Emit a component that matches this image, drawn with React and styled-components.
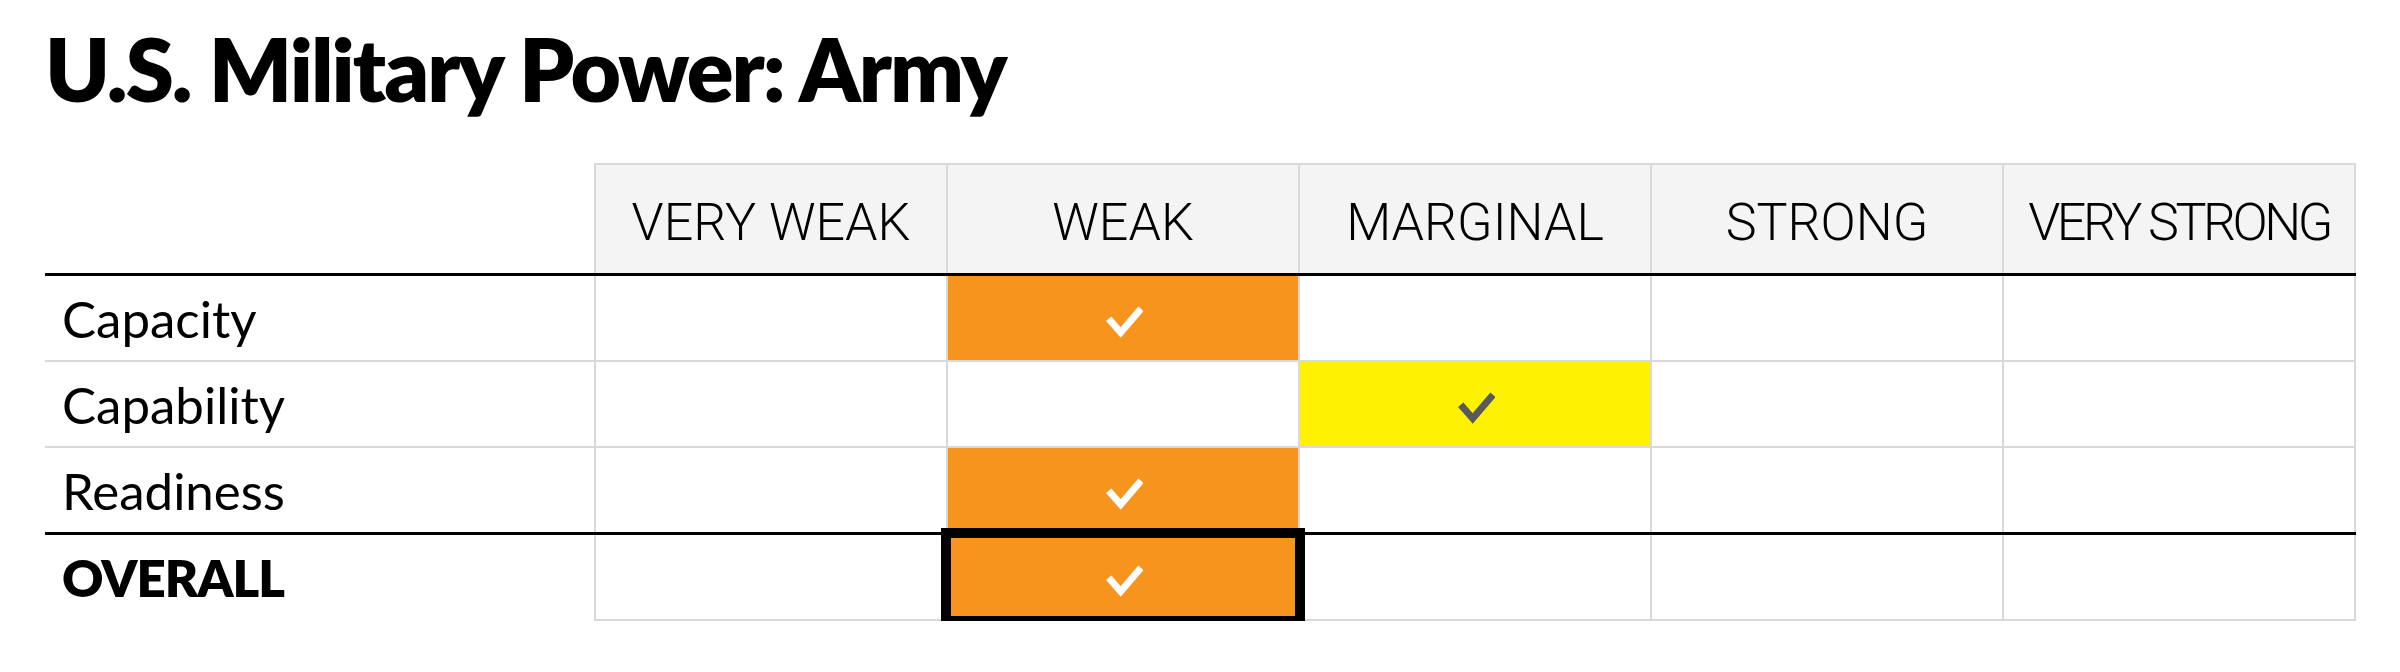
import React from "react";
import styled, { createGlobalStyle } from "styled-components";

const GlobalStyle = createGlobalStyle`
  html, body { margin: 0; padding: 0; background: #ffffff; }
  body { font-family: "Lato", "Liberation Sans", sans-serif; color: #000; }
`;

const Page = styled.div`
  padding: 17px 0 0 45px;
  width: 2400px;
  box-sizing: border-box;
`;

const Title = styled.h1`
  margin: 0 0 42px 0;
  font-family: "Lato", "Liberation Sans", sans-serif;
  font-weight: 800;
  font-size: 87px;
  line-height: 1.2;
  letter-spacing: -2px;
  color: #000;
`;

const Table = styled.table`
  border-collapse: collapse;
  table-layout: fixed;
  width: 2310px;
`;

const LabelCol = styled.col`
  width: 550px;
`;

const DataCol = styled.col`
  width: 352px;
`;

const CornerCell = styled.th`
  border-bottom: 3px solid #000;
  padding: 0;
`;

const HeadCell = styled.th`
  background: #f4f4f4;
  border: 2px solid #d9d9d9;
  border-bottom: 3px solid #000;
  height: 101px;
  padding: 7px 0 0 0;
  font-family: "Roboto", "Lato", "Liberation Sans", sans-serif;
  font-weight: 300;
  font-size: 52px;
  letter-spacing: ${(p) => (p.$tight ? "-3.5px" : "0")};
  text-align: center;
  vertical-align: middle;
  white-space: nowrap;
  color: #000;
`;

const RowLabel = styled.td`
  padding: 0 0 0 17px;
  height: 84px;
  font-family: "Lato", "Liberation Sans", sans-serif;
  font-weight: ${(p) => (p.$bold ? 800 : 400)};
  font-size: 51px;
  letter-spacing: ${(p) => (p.$bold ? "-1px" : "0")};
  text-align: left;
  vertical-align: middle;
  white-space: nowrap;
  border-bottom: ${(p) =>
    p.$edge === "strong" ? "3px solid #000" : p.$edge === "none" ? "none" : "2px solid #d9d9d9"};
`;

const Cell = styled.td`
  padding: 0;
  height: 84px;
  background: ${(p) => p.$fill || "#ffffff"};
  border: 2px solid #d9d9d9;
  border-bottom: ${(p) => (p.$edge === "strong" ? "3px solid #000" : "2px solid #d9d9d9")};
  vertical-align: middle;
  ${(p) =>
    p.$framed
      ? `
    position: relative;
    z-index: 1;
    outline: 10px solid #000;
    outline-offset: -4px;
  `
      : ""}
`;

const CheckSvg = styled.svg`
  display: block;
  margin: 0 auto;
  width: 40px;
  height: 40px;
`;

function Check({ color }) {
  return (
    <CheckSvg viewBox="0 0 40 40" aria-hidden="true">
      <polyline
        points="5.7,20.8 17.7,34.5 38,10.8"
        fill="none"
        stroke={color}
        strokeWidth="7"
        strokeLinecap="butt"
        strokeLinejoin="miter"
      />
    </CheckSvg>
  );
}

const LEVELS = [
  { name: "VERY WEAK" },
  { name: "WEAK" },
  { name: "MARGINAL" },
  { name: "STRONG" },
  { name: "VERY STRONG", tight: true },
];

const ORANGE = "#f7941e";
const YELLOW = "#fff200";

const ROWS = [
  { label: "Capacity", level: 1, fill: ORANGE, check: "#ffffff", edge: "soft" },
  { label: "Capability", level: 2, fill: YELLOW, check: "#58595b", edge: "soft" },
  { label: "Readiness", level: 1, fill: ORANGE, check: "#ffffff", edge: "strong" },
  { label: "OVERALL", level: 1, fill: ORANGE, check: "#ffffff", edge: "none", bold: true, framed: true },
];

export default function App() {
  return (
    <>
      <GlobalStyle />
      <Page>
        <Title>U.S. Military Power: Army</Title>
        <Table>
          <colgroup>
            <LabelCol />
            {LEVELS.map((l) => (
              <DataCol key={l.name} />
            ))}
          </colgroup>
          <thead>
            <tr>
              <CornerCell />
              {LEVELS.map((l) => (
                <HeadCell key={l.name} $tight={l.tight}>
                  {l.name}
                </HeadCell>
              ))}
            </tr>
          </thead>
          <tbody>
            {ROWS.map((r) => (
              <tr key={r.label}>
                <RowLabel $bold={r.bold} $edge={r.edge}>
                  {r.label}
                </RowLabel>
                {LEVELS.map((l, i) => {
                  const on = i === r.level;
                  return (
                    <Cell
                      key={l.name}
                      $fill={on ? r.fill : null}
                      $edge={r.edge}
                      $framed={on && r.framed}
                    >
                      {on ? <Check color={r.check} /> : null}
                    </Cell>
                  );
                })}
              </tr>
            ))}
          </tbody>
        </Table>
      </Page>
    </>
  );
}
